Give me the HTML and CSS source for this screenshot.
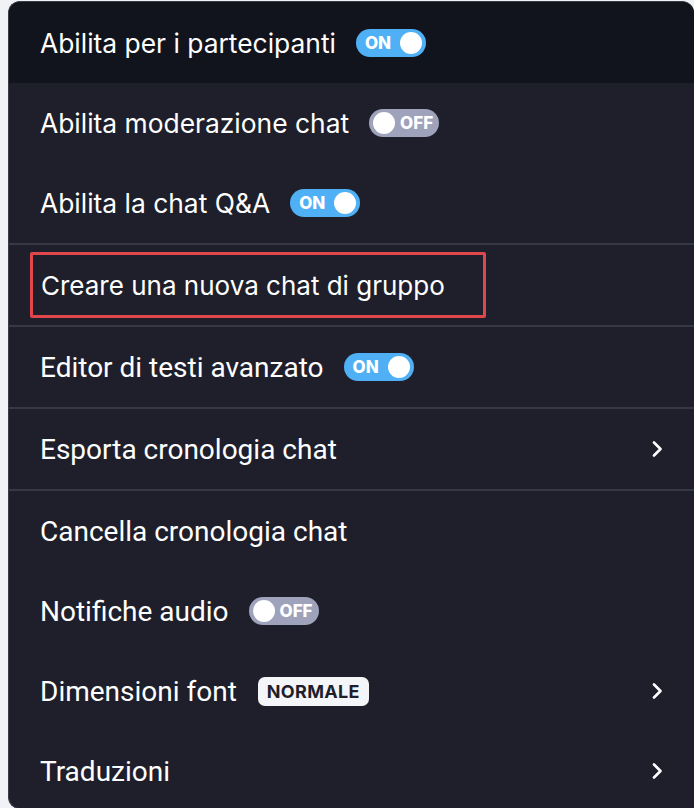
FILE: index.html
```html
<!DOCTYPE html>
<html lang="it">
<head>
  <meta charset="UTF-8">
  <meta name="viewport" content="width=device-width, initial-scale=1.0">
  <title>Impostazioni chat</title>
  <link rel="stylesheet" href="styles.css">
</head>
<body>

  <div class="menu">
    <div class="menu-item active">
      <span class="label">Abilita per i partecipanti</span>
      <span class="toggle on"><span class="toggle-text">ON</span><span class="knob"></span></span>
    </div>
    <div class="menu-item">
      <span class="label">Abilita moderazione chat</span>
      <span class="toggle off"><span class="knob"></span><span class="toggle-text">OFF</span></span>
    </div>
    <div class="menu-item">
      <span class="label">Abilita la chat Q&amp;A</span>
      <span class="toggle on"><span class="toggle-text">ON</span><span class="knob"></span></span>
    </div>

    <div class="divider"></div>

    <div class="menu-item">
      <span class="highlight">Creare una nuova chat di gruppo</span>
    </div>

    <div class="divider"></div>

    <div class="menu-item alt">
      <span class="label">Editor di testi avanzato</span>
      <span class="toggle on"><span class="toggle-text">ON</span><span class="knob"></span></span>
    </div>

    <div class="divider"></div>

    <div class="menu-item alt">
      <span class="label">Esporta cronologia chat</span>
      <svg class="chevron" viewBox="0 0 12 16" width="12" height="16"><path d="M3 1.5 L9.5 8 L3 14.5" /></svg>
    </div>

    <div class="divider"></div>

    <div class="menu-item alt">
      <span class="label">Cancella cronologia chat</span>
    </div>
    <div class="menu-item alt">
      <span class="label">Notifiche audio</span>
      <span class="toggle off"><span class="knob"></span><span class="toggle-text">OFF</span></span>
    </div>
    <div class="menu-item alt">
      <span class="label">Dimensioni font</span>
      <span class="badge">NORMALE</span>
      <svg class="chevron" viewBox="0 0 12 16" width="12" height="16"><path d="M3 1.5 L9.5 8 L3 14.5" /></svg>
    </div>
    <div class="menu-item alt">
      <span class="label">Traduzioni</span>
      <svg class="chevron" viewBox="0 0 12 16" width="12" height="16"><path d="M3 1.5 L9.5 8 L3 14.5" /></svg>
    </div>
  </div>

</body>
</html>
```

FILE: styles.css
```css
/* Common styles */
body {
  margin: 0;
  background-color: #f1f2f6;
  font-family: Inter, "Noto Sans", sans-serif;
  overflow: hidden;
}

/* Menu panel */
.menu {
  margin: 1px 0 0 8px;
  height: 806px;
  background-color: #1e1f2b;
  border: 1px solid #3a3c48;
  border-right: none;
  border-radius: 12px 12px 0 12px;
  overflow: hidden;
  color: #fff;
}

.menu-item {
  display: flex;
  align-items: center;
  height: 80px;
  padding: 0 31px 0 31px;
  font-size: 26.4px;
}

.menu-item.active {
  background-color: #12141d;
  height: 81px;
}

.menu-item.alt {
  font-family: Roboto, "Noto Sans", sans-serif;
  font-size: 28px;
}

.divider {
  height: 2px;
  background-color: #363845;
}

/* Red highlight box */
.highlight {
  margin-left: -10px;
  padding: 0 0 0 8px;
  height: 60px;
  width: 442px;
  box-sizing: content-box;
  display: flex;
  align-items: center;
  border: 3px solid #e0474c;
  border-radius: 2px;
  font-size: 26px;
}

/* Toggles */
.toggle {
  display: flex;
  align-items: center;
  justify-content: space-between;
  width: 70px;
  height: 28px;
  margin-left: 20px;
  padding: 0 4px 0 9px;
  box-sizing: border-box;
  border-radius: 14px;
  font-family: Inter, "Noto Sans", sans-serif;
  font-size: 17px;
  font-weight: 800;
}

.toggle.on {
  background-color: #4fb0f5;
}

.toggle.off {
  background-color: #9ea2ba;
  padding: 0 6px 0 4px;
}

.knob {
  width: 22px;
  height: 22px;
  border-radius: 50%;
  background-color: #fff;
}

/* Badge */
.badge {
  margin-left: 21px;
  padding: 4px 9px;
  background-color: #f4f5f9;
  color: #1e1f2b;
  border-radius: 7px;
  font-family: Inter, "Noto Sans", sans-serif;
  font-size: 18px;
  font-weight: 700;
  letter-spacing: 0.3px;
}

/* Chevron */
.chevron {
  margin-left: auto;
}

.chevron path {
  fill: none;
  stroke: #fff;
  stroke-width: 2.6;
  stroke-linecap: round;
  stroke-linejoin: round;
}
```
